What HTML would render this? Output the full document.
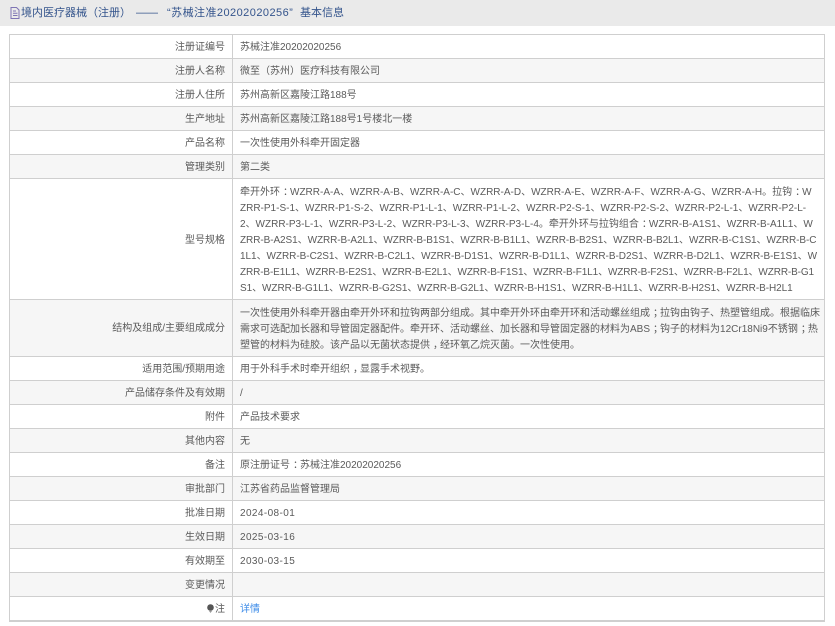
<!DOCTYPE html>
<html><head><meta charset="utf-8"><style>
html,body{margin:0;padding:0;background:#fff}
body{width:835px;height:626px;overflow:hidden;position:relative;font-family:"Liberation Sans","Noto Sans CJK SC",sans-serif;font-size:10px;color:#5a5a5a}
#t{position:absolute;left:0;top:0;width:835px;height:26px;background:#eaeaea;color:#34548c;font-size:11px;line-height:26px;white-space:nowrap}
#t span{position:absolute;top:0}
#t svg{position:absolute;left:10px;top:7px}
.r{position:absolute;left:9px;width:816px;box-sizing:border-box;border:1px solid #cfcfcf;border-top-width:0}
.r.a{background:#f6f6f6}
.l{position:absolute;right:599px;top:0;width:200px;text-align:right;white-space:nowrap;line-height:26px}
.v{position:absolute;left:222px;top:0;bottom:0;border-left:1px solid #cfcfcf;padding:5px 0 0 7px;line-height:16px;white-space:nowrap;width:580px}
.m{padding-top:6px}
.d{letter-spacing:.4px}
.p{position:relative;left:3px}
</style></head><body>
<div id="t"><svg width="10" height="12" viewBox="0 0 10 12"><path d="M1 .5h5.500L9 3v8.500H1zM3 4h3M3 6.200h4.500M3 8.500h4.500" fill="none" stroke="#7e74b4" stroke-width="1"/></svg><span style="left:21px">境内医疗器械</span><span style="left:87px">（注册）</span><span style="left:136px">——</span><span style="left:167px;letter-spacing:.45px">“苏械注准20202020256”</span><span style="left:300px">基本信息</span></div>
<div class="r" style="top:34px;height:25px;border-top-width:1px"><div class="l">注册证编号</div><div class="v">苏械注准20202020256</div></div>
<div class="r a" style="top:59px;height:24px"><div class="l">注册人名称</div><div class="v">微至（苏州）医疗科技有限公司</div></div>
<div class="r" style="top:83px;height:24px"><div class="l">注册人住所</div><div class="v">苏州高新区嘉陵江路188号</div></div>
<div class="r a" style="top:107px;height:24px"><div class="l">生产地址</div><div class="v">苏州高新区嘉陵江路188号1号楼北一楼</div></div>
<div class="r" style="top:131px;height:24px"><div class="l">产品名称</div><div class="v">一次性使用外科牵开固定器</div></div>
<div class="r a" style="top:155px;height:24px"><div class="l">管理类别</div><div class="v">第二类</div></div>
<div class="r" style="top:179px;height:121px"><div class="l" style="line-height:124px">型号规格</div><div class="v m">牵开外环<span class="p">：</span>WZRR-A-A、WZRR-A-B、WZRR-A-C、WZRR-A-D、WZRR-A-E、WZRR-A-F、WZRR-A-G、WZRR-A-H。拉钩<span class="p">：</span>W<br>ZRR-P1-S-1、WZRR-P1-S-2、WZRR-P1-L-1、WZRR-P1-L-2、WZRR-P2-S-1、WZRR-P2-S-2、WZRR-P2-L-1、WZRR-P2-L-<br>2、WZRR-P3-L-1、WZRR-P3-L-2、WZRR-P3-L-3、WZRR-P3-L-4。牵开外环与拉钩组合<span class="p">：</span>WZRR-B-A1S1、WZRR-B-A1L1、W<br><span style="letter-spacing:-.07px">ZRR-B-A2S1、WZRR-B-A2L1、WZRR-B-B1S1、WZRR-B-B1L1、WZRR-B-B2S1、WZRR-B-B2L1、WZRR-B-C1S1、WZRR-B-C</span><br><span style="letter-spacing:-.04px">1L1、WZRR-B-C2S1、WZRR-B-C2L1、WZRR-B-D1S1、WZRR-B-D1L1、WZRR-B-D2S1、WZRR-B-D2L1、WZRR-B-E1S1、W</span><br><span style="letter-spacing:-.12px">ZRR-B-E1L1、WZRR-B-E2S1、WZRR-B-E2L1、WZRR-B-F1S1、WZRR-B-F1L1、WZRR-B-F2S1、WZRR-B-F2L1、WZRR-B-G1</span><br><span style="letter-spacing:-.06px">S1、WZRR-B-G1L1、WZRR-B-G2S1、WZRR-B-G2L1、WZRR-B-H1S1、WZRR-B-H1L1、WZRR-B-H2S1、WZRR-B-H2L1</span></div></div>
<div class="r a" style="top:300px;height:57px"><div class="l" style="line-height:58px">结构及组成/主要组成成分</div><div class="v m">一次性使用外科牵开器由牵开外环和拉钩两部分组成。其中牵开外环由牵开环和活动螺丝组成<span class="p">；</span>拉钩由钩子、热塑管组成。根据临床<br>需求可选配加长器和导管固定器配件。牵开环、活动螺丝、加长器和导管固定器的材料为ABS<span class="p">；</span>钩子的材料为12Cr18Ni9不锈钢<span class="p">；</span>热<br>塑管的材料为硅胶。该产品以无菌状态提供<span class="p">，</span>经环氧乙烷灭菌。一次性使用。</div></div>
<div class="r" style="top:357px;height:24px"><div class="l">适用范围/预期用途</div><div class="v">用于外科手术时牵开组织<span class="p">，</span>显露手术视野。</div></div>
<div class="r a" style="top:381px;height:24px"><div class="l">产品储存条件及有效期</div><div class="v">/</div></div>
<div class="r" style="top:405px;height:24px"><div class="l">附件</div><div class="v">产品技术要求</div></div>
<div class="r a" style="top:429px;height:24px"><div class="l">其他内容</div><div class="v">无</div></div>
<div class="r" style="top:453px;height:24px"><div class="l">备注</div><div class="v">原注册证号<span class="p">：</span>苏械注准20202020256</div></div>
<div class="r a" style="top:477px;height:24px"><div class="l">审批部门</div><div class="v">江苏省药品监督管理局</div></div>
<div class="r" style="top:501px;height:24px"><div class="l">批准日期</div><div class="v d">2024-08-01</div></div>
<div class="r a" style="top:525px;height:24px"><div class="l">生效日期</div><div class="v d">2025-03-16</div></div>
<div class="r" style="top:549px;height:24px"><div class="l">有效期至</div><div class="v d">2030-03-15</div></div>
<div class="r a" style="top:573px;height:24px"><div class="l">变更情况</div><div class="v"></div></div>
<div class="r" style="top:597px;height:25px;border-bottom-width:2px"><div class="l"><svg width="7" height="9" viewBox="0 0 7 9" style="vertical-align:-1px;margin-right:1px"><circle cx="3.500" cy="3.500" r="3.300" fill="#555"/><path d="M2 7h3l-1.500 2z" fill="#999"/></svg>注</div><div class="v" style="color:#3c8be8">详情</div></div>
</body></html>
